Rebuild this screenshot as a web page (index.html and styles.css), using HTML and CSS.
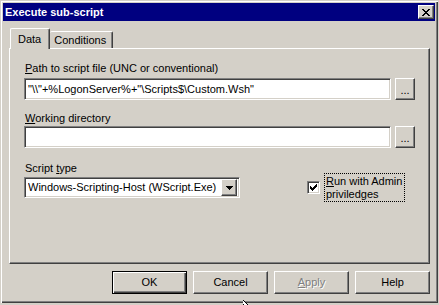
FILE: index.html
```html
<!DOCTYPE html>
<html>
	<head>
		<title>Execute sub-script</title>
		<meta charset="UTF-8"/>
		<link rel="stylesheet" href="styles.css">
	</head>
	<body>
		<div class="window">

		  <div class="titlebar">
			<span class="title">Execute sub-script</span>
			<span class="close">
			  <svg width="8" height="7" viewBox="0 0 8 7" shape-rendering="crispEdges">
				<path d="M0 0h2v1h-2zM6 0h2v1h-2zM1 1h2v1h-2zM5 1h2v1h-2zM2 2h4v1h-4zM3 3h2v1h-2zM2 4h4v1h-4zM1 5h2v1h-2zM5 5h2v1h-2zM0 6h2v1h-2zM6 6h2v1h-2z" fill="#000"/>
			  </svg>
			</span>
		  </div>

		  <div class="client">

			<div class="tabs">
			  <div class="tab active">Data</div>
			  <div class="tab">Conditions</div>
			</div>

			<div class="panel">

			  <div class="field first">
				<label class="caption"><u>P</u>ath to script file (UNC or conventional)</label>
				<div class="row">
				  <div class="edit">"\\"+%LogonServer%+"\Scripts$\Custom.Wsh"</div>
				  <div class="btn browse">...</div>
				</div>
			  </div>

			  <div class="field second">
				<label class="caption"><u>W</u>orking directory</label>
				<div class="row">
				  <div class="edit"></div>
				  <div class="btn browse">...</div>
				</div>
			  </div>

			  <div class="typerow">
				<div class="field third">
				  <label class="caption">Script <u>t</u>ype</label>
				  <div class="combo">
					<span class="combo-text">Windows-Scripting-Host (WScript.Exe)</span>
					<span class="btn drop">
					  <svg width="7" height="4" viewBox="0 0 7 4" shape-rendering="crispEdges">
						<path d="M0 0h7v1h-7zM1 1h5v1h-5zM2 2h3v1h-3zM3 3h1v1h-1z" fill="#000"/>
					  </svg>
					</span>
				  </div>
				</div>
				<div class="check">
				  <span class="box">
					<svg width="7" height="7" viewBox="0 0 7 7" shape-rendering="crispEdges">
					  <path d="M6 0h1v3h-1zM5 1h1v3h-1zM4 2h1v3h-1zM3 3h1v3h-1zM2 4h1v3h-1zM1 3h1v3h-1zM0 2h1v3h-1z" fill="#000"/>
					</svg>
				  </span>
				  <span class="check-label"><u>R</u>un with Admin<br>priviledges</span>
				</div>
			  </div>

			</div>

			<div class="buttons">
			  <div class="btn push default">OK</div>
			  <div class="btn push">Cancel</div>
			  <div class="btn push disabled"><u>A</u>pply</div>
			  <div class="btn push">Help</div>
			</div>

		  </div>
		</div>

		<svg class="cursor" width="8" height="8" viewBox="0 0 8 8" shape-rendering="crispEdges">
		  <path d="M0 0h1v1h1v1h1v1h1v1h1v1h1v1h-2v1h-1v1h-1v-1h-1v-6z" fill="#000"/>
		  <path d="M1 2h1v1h1v1h1v1h1v1h-2v1h-1z" fill="#fff"/>
		</svg>
	</body>
</html>
```

FILE: styles.css
```css
* {
  box-sizing: border-box;
}

body {
  margin: 0;
  background: #d4d0c8;
  font-family: "Liberation Sans", Arial, sans-serif;
  font-size: 11px;
  line-height: 13px;
  color: #000;
}

.window {
  width: 438px;
  height: 303px;
  padding: 3px;
  background: #d4d0c8;
  box-shadow: inset 1px 1px 0 #d4d0c8, inset 2px 2px 0 #fff,
    inset -1px -1px 0 #404040, inset -2px -2px 0 #808080;
}

.titlebar {
  display: flex;
  align-items: flex-start;
  height: 18px;
  padding-left: 2px;
  background: #000080;
  color: #fff;
}

.title {
  font-weight: bold;
  line-height: 18px;
}

.close {
  display: flex;
  align-items: center;
  justify-content: center;
  width: 16px;
  height: 14px;
  margin: 2px 1px 0 auto;
  background: #d4d0c8;
  border: 1px solid;
  border-color: #fff #404040 #404040 #fff;
  box-shadow: inset -1px -1px 0 #808080;
}

.tabs {
  display: flex;
  align-items: flex-end;
  height: 20px;
  margin: 7px 0 0 7px;
  position: relative;
  z-index: 1;
}

.tab {
  height: 17px;
  padding: 2px 6px 0 6px;
  border: 1px solid;
  border-bottom: none;
  border-color: #fff #404040 #404040 #fff;
  border-radius: 2px 2px 0 0;
  box-shadow: inset -1px 0 0 #808080;
  background: #d4d0c8;
}

.tab.active {
  height: 21px;
  margin-bottom: -1px;
  padding: 4px 8px 0 7px;
}

.tab.active + .tab {
  border-left: none;
  padding-left: 4px;
}

.panel {
  height: 216px;
  margin: 0 5px 0 6px;
  padding: 13px 14px 0 14px;
  border: 1px solid;
  border-color: #fff #404040 #404040 #fff;
  box-shadow: inset -1px -1px 0 #808080;
}

.caption {
  display: block;
  padding-left: 1px;
}

.first .caption {
  margin-bottom: 3px;
}

.second {
  margin-top: 12px;
}

.second .caption {
  margin-bottom: 1px;
}

.third .caption {
  margin-bottom: 2px;
}

.row {
  display: flex;
  gap: 4px;
}

.edit {
  width: 368px;
  height: 22px;
  padding: 4px 3px 0 3px;
  background: #fff;
  white-space: pre;
  overflow: hidden;
  border: 1px solid;
  border-color: #808080 #fff #fff #808080;
  box-shadow: inset 1px 1px 0 #404040, inset -1px -1px 0 #d4d0c8;
}

.btn {
  background: #d4d0c8;
  border: 1px solid;
  border-color: #fff #404040 #404040 #fff;
  box-shadow: inset -1px -1px 0 #808080;
}

.browse {
  width: 20px;
  height: 22px;
  padding-top: 5px;
  text-align: center;
}

.typerow {
  display: flex;
  align-items: flex-start;
  margin-top: 14px;
}

.combo {
  display: flex;
  align-items: center;
  width: 216px;
  height: 21px;
  padding: 2px 2px 2px 3px;
  background: #fff;
  border: 1px solid;
  border-color: #808080 #fff #fff #808080;
  box-shadow: inset 1px 1px 0 #404040, inset -1px -1px 0 #d4d0c8;
}

.combo-text {
  flex: 1;
  white-space: nowrap;
  overflow: hidden;
}

.drop {
  display: flex;
  align-items: center;
  justify-content: center;
  width: 16px;
  height: 17px;
}

.check {
  display: flex;
  align-items: center;
  gap: 4px;
  margin: 11px 0 0 67px;
}

.box {
  display: flex;
  align-items: center;
  justify-content: center;
  width: 13px;
  height: 13px;
  background: #fff;
  border: 1px solid;
  border-color: #808080 #fff #fff #808080;
  box-shadow: inset 1px 1px 0 #404040, inset -1px -1px 0 #d4d0c8;
}

.check-label {
  height: 29px;
  padding: 1px 2px 0 1px;
  white-space: nowrap;
  border: 1px dotted #000;
}

.buttons {
  display: flex;
  justify-content: flex-end;
  gap: 6px;
  margin: 7px 5px 0 0;
}

.push {
  width: 75px;
  height: 23px;
  padding-top: 4px;
  text-align: center;
}

.push.default {
  border: 1px solid #000;
  box-shadow: inset 1px 1px 0 #fff, inset -1px -1px 0 #404040, inset -2px -2px 0 #808080;
}

.push.disabled {
  color: #808080;
  text-shadow: 1px 1px 0 #fff;
}

.cursor {
  position: absolute;
  left: 242px;
  top: 299px;
}
```
